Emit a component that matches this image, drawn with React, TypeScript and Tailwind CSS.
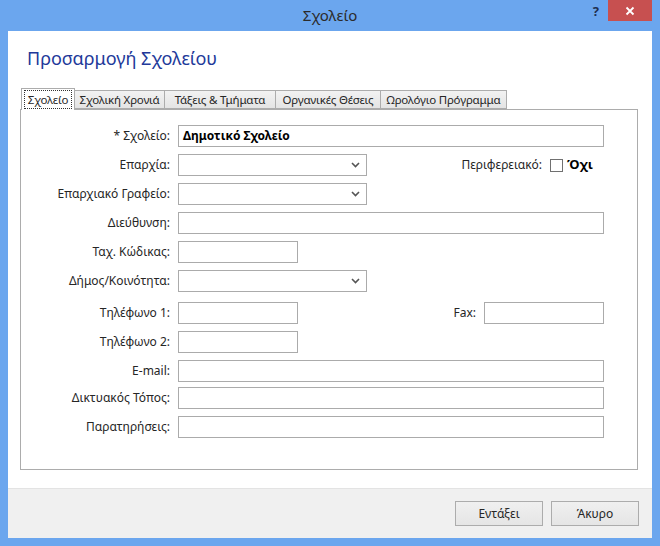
import React from 'react';

const labelCls = "w-[157px] shrink-0 text-right pr-[8px] text-[12px] text-[#262626] whitespace-nowrap";
const boxCls = "h-[22px] border border-[#ababab] bg-white";

const Field: React.FC<{ label: string; width: string; children?: React.ReactNode; mt: string }> = ({ label, width, children, mt }) => (
  <div className={`flex items-center ${mt}`}>
    <div className={labelCls}>{label}</div>
    <div className={`${boxCls} ${width}`} />
    {children}
  </div>
);

const Select: React.FC<{ label: string; mt: string; children?: React.ReactNode }> = ({ label, mt, children }) => (
  <div className={`flex items-center ${mt}`}>
    <div className={labelCls}>{label}</div>
    <div className={`${boxCls} w-[189px] flex items-center justify-end pr-[6px]`}>
      <svg width="9" height="6" viewBox="0 0 9 6">
        <polyline points="1,1 4.5,4.5 8,1" fill="none" stroke="#555" strokeWidth="1.6" />
      </svg>
    </div>
    {children}
  </div>
);

export default function App() {
  const tabs = [
    { name: 'Σχολική Χρονιά', w: 'w-[91px]' },
    { name: 'Τάξεις & Τμήματα', w: 'w-[112px]' },
    { name: 'Οργανικές Θέσεις', w: 'w-[106px]' },
    { name: 'Ωρολόγιο Πρόγραμμα', w: 'w-[127px]' },
  ];

  return (
    <div className="w-[660px] h-[546px] bg-[#6ba6ee] flex flex-col font-['Noto_Sans',sans-serif] text-[#262626]">
      {/* title bar */}
      <div className="h-[31px] shrink-0 grid grid-cols-[1fr_auto_1fr]">
        <div />
        <div className="pt-[4px] text-[15px] text-[#2b2b2b]">Σχολείο</div>
        <div className="flex justify-end items-start pr-[8px]">
          <div className="pt-[2px] pr-[9px] text-[13px] font-bold text-[#1e2f4f]">?</div>
          <div className="w-[44px] h-[21px] bg-[#c75050] flex items-center justify-center">
            <svg width="10" height="10" viewBox="0 0 10 10">
              <path d="M1.5 1.5 L8.5 8.5 M8.5 1.5 L1.5 8.5" stroke="#fff" strokeWidth="1.8" />
            </svg>
          </div>
        </div>
      </div>

      <div className="mx-[8px] mb-[8px] flex-1 flex flex-col bg-white">
        <div className="flex-1 flex flex-col px-[12px]">
          <div className="h-[56px] pl-[7px] pt-[14px] text-[18px] text-[#22399a]">Προσαρμογή Σχολείου</div>

          {/* tabs */}
          <div className="flex items-end h-[22px] pl-[1px]">
            <div className="relative z-10 w-[54px] h-[22px] -mb-[1px] bg-white border border-b-0 border-[#acacac] px-[2px] pt-[1px]">
              <div className="h-[19px] border border-dotted border-[#333] flex items-center justify-center text-[11.5px] tracking-[-0.2px]">Σχολείο</div>
            </div>
            {tabs.map((t) => (
              <div key={t.name} className={`${t.w} h-[19px] -ml-[1px] first:ml-[1px] border border-[#acacac] bg-gradient-to-b from-[#f2f2f2] to-[#e4e4e4] flex items-center justify-center text-[11.5px] tracking-[-0.2px] whitespace-nowrap text-[#262626]`}>
                {t.name}
              </div>
            ))}
          </div>

          {/* panel */}
          <div className="w-[618px] h-[361px] border border-[#acacac] flex flex-col pr-[33px]">
            <div className={`flex items-center mt-[15px]`}>
              <div className={labelCls}>* Σχολείο:</div>
              <div className={`${boxCls} flex-1 flex items-center pl-[4px] text-[12px] font-bold text-black`}>Δημοτικό Σχολείο</div>
            </div>
            <Select label="Επαρχία:" mt="mt-[7px]">
              <div className="flex-1 flex items-center justify-end text-[12px]">
                <span className="mr-[8px]">Περιφερειακό:</span>
                <span className="w-[13px] h-[13px] border border-[#707070] bg-white mr-[4px]" />
                <span className="font-bold text-[13px] text-black">Όχι</span>
                <span className="w-[11px]" />
              </div>
            </Select>
            <Select label="Επαρχιακό Γραφείο:" mt="mt-[7px]" />
            <div className="flex items-center mt-[7px]">
              <div className={labelCls}>Διεύθυνση:</div>
              <div className={`${boxCls} flex-1`} />
            </div>
            <Field label="Ταχ. Κώδικας:" width="w-[120px]" mt="mt-[7px]" />
            <Select label="Δήμος/Κοινότητα:" mt="mt-[7px]" />
            <Field label="Τηλέφωνο 1:" width="w-[120px]" mt="mt-[10px]">
              <div className="flex-1 text-right pr-[8px] text-[12px]">Fax:</div>
              <div className={`${boxCls} w-[120px]`} />
            </Field>
            <Field label="Τηλέφωνο 2:" width="w-[120px]" mt="mt-[7px]" />
            <div className="flex items-center mt-[7px]">
              <div className={labelCls}>E-mail:</div>
              <div className={`${boxCls} flex-1`} />
            </div>
            <div className="flex items-center mt-[5px]">
              <div className={labelCls}>Δικτυακός Τόπος:</div>
              <div className={`${boxCls} flex-1`} />
            </div>
            <div className="flex items-center mt-[7px]">
              <div className={labelCls}>Παρατηρήσεις:</div>
              <div className={`${boxCls} flex-1`} />
            </div>
          </div>
        </div>

        {/* footer */}
        <div className="h-[50px] shrink-0 bg-[#f0f0f0] border-t border-[#e3e3e3] flex items-start justify-end gap-[8px] pr-[13px] pt-[12px]">
          <button className="w-[88px] h-[25px] border border-[#acacac] bg-gradient-to-b from-[#f0f0f0] to-[#e5e5e5] text-[12px] text-[#262626]">Εντάξει</button>
          <button className="w-[88px] h-[25px] border border-[#acacac] bg-gradient-to-b from-[#f0f0f0] to-[#e5e5e5] text-[12px] text-[#262626]">Άκυρο</button>
        </div>
      </div>
    </div>
  );
}
